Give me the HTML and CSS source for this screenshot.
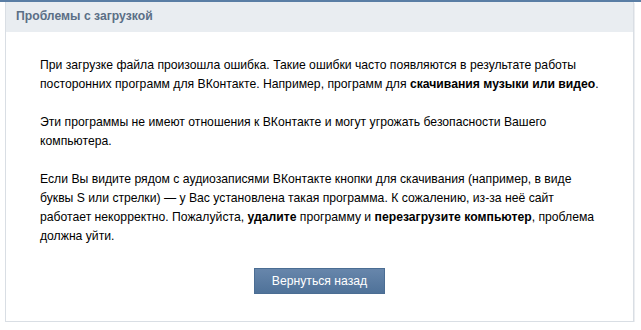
FILE: index.html
```html
<!DOCTYPE html>
<html lang="ru">
<head>
  <meta charset="UTF-8" />
  <title>Проблемы с загрузкой</title>
  <link rel="stylesheet" href="styles.css">
</head>
<body>
  <div class="top-bar"></div>
  <div class="box">
    <div class="box-header">Проблемы с загрузкой</div>
    <div class="box-body">
      <p>При загрузке файла произошла ошибка. Такие ошибки часто появляются в результате работы посторонних программ для ВКонтакте. Например, программ для <b>скачивания музыки или видео</b>.</p>
      <p>Эти программы не имеют отношения к ВКонтакте и могут угрожать безопасности Вашего компьютера.</p>
      <p>Если Вы видите рядом с аудиозаписями ВКонтакте кнопки для скачивания (например, в виде буквы S или стрелки) — у Вас установлена такая программа. К сожалению, из-за неё сайт работает некорректно. Пожалуйста, <b>удалите</b> программу и <b>перезагрузите компьютер</b>, проблема должна уйти.</p>
      <div class="actions">
        <button class="btn">Вернуться назад</button>
      </div>
    </div>
  </div>
</body>
</html>
```

FILE: styles.css
```css
body {
  margin: 0;
  padding: 0;
  background: #fff;
  font-family: "Liberation Sans", Arial, sans-serif;
  font-size: 12.2px;
  color: #000;
}

.top-bar {
  height: 2px;
  background: #5a7ea5;
}

.box {
  width: 627px;
  margin-left: 5px;
  border: 1px solid #d9dee4;
  border-top: 0;
  box-shadow: 1px 1px 0 #eceef1;
}

.box-header {
  height: 30px;
  line-height: 28px;
  padding-left: 10px;
  background: #e9edf1;
  color: #5b6f86;
  font-weight: bold;
  font-size: 12.2px;
}

.box-body {
  padding: 24px 34px 27px;
}

.box-body p {
  margin: 0 0 19px;
  line-height: 19px;
}

.actions {
  margin-top: 22px;
  text-align: center;
}

.btn {
  height: 26px;
  padding: 0 17px;
  font-family: inherit;
  font-size: 12.2px;
  color: #fff;
  background: linear-gradient(to bottom, #6786ab, #4f7299);
  border: 1px solid #4b6d93;
  border-radius: 0;
  cursor: pointer;
}
```
